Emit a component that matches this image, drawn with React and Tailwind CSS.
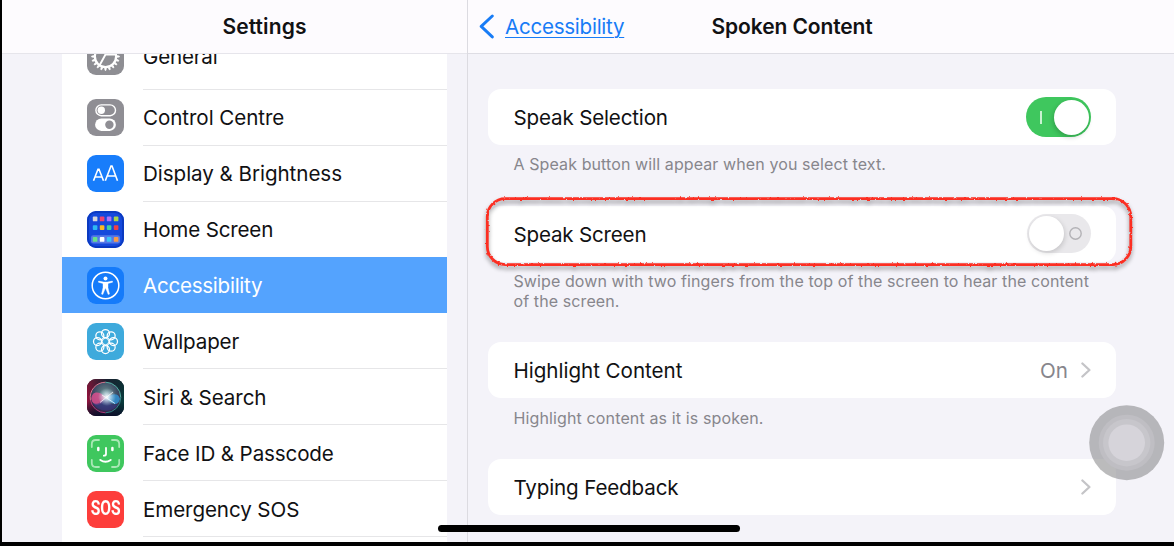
const FONT = "font-['Inter',sans-serif]";

function Tile({ className, children }) {
  return (
    <span className={`block h-[37px] w-[37px] shrink-0 overflow-hidden rounded-[9px] ${className}`}>
      <svg viewBox="0 0 37 37" width="37" height="37" fill="none">
        {children}
      </svg>
    </span>
  );
}

const teeth = Array.from({ length: 20 }, (_, i) => i * 18);
const petals = Array.from({ length: 8 }, (_, i) => (i * Math.PI) / 4);

function GearIcon() {
  return (
    <Tile className="bg-[#8e8e93]">
      <circle cx="18.5" cy="18.5" r="10.6" stroke="#fff" strokeWidth="2.2" />
      {teeth.map((a) => (
        <path key={a} d="M17.7 7.2L18 4.7H19L19.3 7.2Z" fill="#fff" stroke="#fff" strokeWidth=".8" transform={`rotate(${a} 18.5 18.5)`} />
      ))}
      <path d="M18.5 16.5H29M18.5 16.5L13.2 9.4M18.5 16.5L12.6 27.2" stroke="#fff" strokeWidth="1.9" />
    </Tile>
  );
}

function ControlIcon() {
  return (
    <Tile className="bg-[#8f8e94]">
      <rect x="8.9" y="5.9" width="19.6" height="10.8" rx="5.4" stroke="#fff" strokeWidth="1.4" />
      <circle cx="14.3" cy="11.3" r="3.7" fill="#fff" />
      <rect x="8.1" y="19.4" width="20.8" height="12.5" rx="6.25" fill="#fff" />
      <circle cx="22.4" cy="25.7" r="4.2" fill="#8f8e94" />
    </Tile>
  );
}

function DisplayIcon() {
  return (
    <Tile className="bg-[#187dfb]">
      <path d="M6.5 25.8L11 14.3H12L16.5 25.8M8.1 22H14.9M18.3 25.8L24 11H25L30.5 25.8M20.2 21H28.8" stroke="#fff" strokeWidth="1.6" />
    </Tile>
  );
}

const apps = [
  ["#d5d6dc", "#f04470", "#b074f6", "#a9d54d"],
  ["#2db9f3", "#f9b922", "#3fd19c", "#f33f43"],
  ["#68e18a", "#ffffff", "#38c5f8", "#f79a48"],
];

function HomeIcon() {
  return (
    <Tile className="bg-[#1549dc]">
      <rect x="1" y="1" width="35" height="35" rx="8" stroke="#0b3ac0" strokeWidth="2" />
      <rect x="4" y="24.2" width="29" height="8.4" rx="2.4" fill="#5578e6" />
      {apps.map((row, r) =>
        row.map((c, i) => (
          <rect key={`${r}-${i}`} x={5.8 + i * 7} y={[5.5, 14.2, 26][r]} width="4.6" height="4.8" rx=".9" fill={c} />
        ))
      )}
    </Tile>
  );
}

function PersonIcon() {
  return (
    <Tile className="bg-[#157bfa]">
      <circle cx="18.5" cy="18.5" r="13.3" stroke="#fff" strokeWidth="1.5" />
      <circle cx="18.5" cy="11.5" r="2" fill="#fff" />
      <path d="M11.6 14.1L16.8 15.1H20.2L25.4 14.1L25.6 15.2L21 16.5V20.8L22.5 27.1L21.2 27.5L18.8 21.6H18.2L15.8 27.5L14.5 27.1L16 20.8V16.5L11.4 15.2Z" fill="#fff" stroke="#fff" strokeWidth=".4" strokeLinejoin="round" />
    </Tile>
  );
}

function WallpaperIcon() {
  return (
    <Tile className="bg-[#3eaadc]">
      <g stroke="#fff" strokeWidth="1.25">
        {petals.map((a) => (
          <circle key={a} cx={18.5 + 8 * Math.cos(a)} cy={18.5 + 8 * Math.sin(a)} r="4" />
        ))}
      </g>
      <circle cx="18.5" cy="18.5" r="3.2" stroke="#fff" strokeWidth="1" />
      <circle cx="18.5" cy="18.5" r="2.3" fill="#3eaadc" />
    </Tile>
  );
}

function SiriIcon() {
  return (
    <Tile className="bg-[#151525]">
      <defs>
        <linearGradient id="siriBack" x1="0" y1=".3" x2="1" y2=".5">
          <stop offset="0" stopColor="#a3123e" />
          <stop offset=".45" stopColor="#241c38" />
          <stop offset="1" stopColor="#073c3c" />
        </linearGradient>
        <linearGradient id="siriShade" x1="0" y1="0" x2="0" y2="1">
          <stop offset="0" stopColor="#0c2724" stopOpacity=".4" />
          <stop offset=".6" stopColor="#0c1024" stopOpacity="0" />
          <stop offset="1" stopColor="#0b0b28" stopOpacity=".9" />
        </linearGradient>
        <radialGradient id="siriOrb" cx=".5" cy=".35" r=".65">
          <stop offset="0" stopColor="#6b8f90" />
          <stop offset=".6" stopColor="#3c4a63" />
          <stop offset="1" stopColor="#332042" />
        </radialGradient>
        <radialGradient id="siriGlow">
          <stop offset="0" stopColor="#fff" />
          <stop offset=".35" stopColor="#e8f6ff" stopOpacity=".7" />
          <stop offset="1" stopColor="#b9dfee" stopOpacity="0" />
        </radialGradient>
      </defs>
      <rect width="37" height="37" fill="url(#siriBack)" />
      <rect width="37" height="37" fill="url(#siriShade)" />
      <circle cx="18.5" cy="18.5" r="15.2" fill="url(#siriOrb)" />
      <path d="M4.2 20C5 11 13 12 19 18.6C14 28 6 28 4.2 20Z" fill="#e34f91" opacity=".8" />
      <path d="M33 20C31 13 25 15 19 18.6C24 26 31 28 33 20Z" fill="#3190d1" opacity=".85" />
      <path d="M6 24C13 27 15 20 19 18.5C22 24 27 28 31 25C27 34 11 34 6 24Z" fill="#363989" opacity=".6" />
      <circle cx="20" cy="18" r="9" fill="url(#siriGlow)" />
      <path d="M15 16L28 24.5M26 13L13 23.5" stroke="#fff" strokeWidth=".9" opacity=".8" />
      <path d="M3.4 21A15.3 15.3 0 0 1 18.5 3.2" stroke="#e58096" strokeWidth=".9" />
      <path d="M18.5 3.2A15.3 15.3 0 0 1 33.8 18.5" stroke="#58bdad" strokeWidth=".9" />
      <path d="M33.8 18.5A15.3 15.3 0 0 1 18.5 33.8" stroke="#33918f" strokeWidth=".9" />
      <path d="M18.5 33.8A15.3 15.3 0 0 1 3.4 21" stroke="#bb3e80" strokeWidth=".9" />
    </Tile>
  );
}

function FaceIcon() {
  return (
    <Tile className="bg-[#3fc75e]">
      <path d="M4.8 12V9Q4.8 5 8.8 5H12M25 5H28.2Q32.2 5 32.2 9V12M32.2 25V28Q32.2 32 28.2 32H25M12 32H8.8Q4.8 32 4.8 28V25" stroke="#a9e8b5" strokeWidth="1.8" strokeLinecap="round" />
      <g stroke="#fff" strokeLinecap="round">
        <path d="M11.3 12.9V15.1M25.4 12.9V15.1" strokeWidth="2.5" />
        <path d="M19 12.8V19Q19 20.7 16.8 20.7" strokeWidth="1.8" />
        <path d="M13.3 24.9Q18.5 28.7 23.7 24.9" strokeWidth="1.9" />
      </g>
    </Tile>
  );
}

function SosIcon() {
  return (
    <span className="flex h-[37px] w-[37px] shrink-0 items-center justify-center rounded-[9px] bg-[#fd3e3b] font-['Roboto',sans-serif] text-[19.5px] font-bold text-white">
      <span className="scale-x-[.8]">SOS</span>
    </span>
  );
}

const items = [
  { label: "General", icon: GearIcon, track: "tracking-[-0.2px]", height: "h-[66px]" },
  { label: "Control Centre", icon: ControlIcon, track: "tracking-[-0.07px]" },
  { label: "Display & Brightness", icon: DisplayIcon, track: "tracking-[-0.05px]" },
  { label: "Home Screen", icon: HomeIcon, track: "tracking-[-0.17px]" },
  { label: "Accessibility", icon: PersonIcon, track: "tracking-[-0.27px]", active: true },
  { label: "Wallpaper", icon: WallpaperIcon, track: "tracking-[-0.17px]" },
  { label: "Siri & Search", icon: SiriIcon, track: "tracking-[-0.08px]", raised: true },
  { label: "Face ID & Passcode", icon: FaceIcon, track: "tracking-[-0.14px]", raised: true },
  { label: "Emergency SOS", icon: SosIcon, track: "tracking-[-0.1px]", raised: true },
];

function SidebarRow({ label, icon: Icon, track, height = "h-[56px]", active, lineless, raised }) {
  return (
    <li className={`flex ${height} shrink-0 items-center pl-[25px] ${active ? "bg-[#54a3fe] text-white" : ""}`}>
      <Icon />
      <span
        className={`ml-[19px] flex h-full flex-1 items-center border-t ${raised ? "mb-[2px]" : ""} ${
          lineless ? "border-transparent" : "border-[#e6e6e8]"
        } ${track}`}
      >
        <span className={raised ? "pt-[3px]" : "pt-[1px]"}>{label}</span>
      </span>
    </li>
  );
}

function Card({ label, track, children }) {
  return (
    <div className="flex h-[56px] items-center justify-between rounded-[13px] bg-white pl-[25.5px] pr-[25px]">
      <span className={`pt-[2px] ${track}`}>{label}</span>
      {children}
    </div>
  );
}

function Chevron() {
  return (
    <svg width="10" height="16" viewBox="0 0 10 16" fill="none">
      <path d="M1.4 1.5L8.4 8L1.4 14.5" stroke="#c4c4c7" strokeWidth="2.3" strokeLinecap="round" strokeLinejoin="round" />
    </svg>
  );
}

function Switch({ on }) {
  return on ? (
    <span className="flex h-[40px] w-[65px] items-center justify-between rounded-full bg-[#3fc75e] pl-[14px] pr-[2px]">
      <span className="h-[13px] w-[2px] bg-[#c9f3d2]" />
      <span className="h-[35px] w-[35px] rounded-full bg-white shadow-[-1px_2px_5px_rgba(0,0,0,0.2)]" />
    </span>
  ) : (
    <span className="mb-[1px] flex h-[39px] w-[64px] items-center justify-between rounded-full bg-[#e9e8eb] pl-[2px] pr-[9px]">
      <span className="h-[35px] w-[35px] rounded-full bg-white shadow-[1px_2px_5px_rgba(0,0,0,0.15)]" />
      <svg width="13" height="13" viewBox="0 0 13 13" fill="none">
        <circle cx="6.5" cy="6.5" r="5.7" stroke="#b3b2b6" strokeWidth="1.4" />
      </svg>
    </span>
  );
}

export default function App() {
  return (
    <div className={`${FONT} relative flex h-[546px] w-[1174px] overflow-hidden border-b-4 border-l-2 border-black bg-[#f4f3f9] text-[20.6px] leading-[26px] text-[#111113]`}>
      <aside className="flex w-[466px] shrink-0 flex-col border-r border-[#dcdbe1] box-border">
        <header className="flex h-[54px] shrink-0 items-center justify-center border-b border-[#e6e5eb] bg-[#fdfbfe] pl-[60px]">
          <h1 className="text-[21px] font-semibold tracking-[0.1px]">Settings</h1>
        </header>
        <nav className="ml-[60px] w-[385px] flex-1 overflow-hidden bg-white">
          <ul className="-mt-[31px]">
            {items.map((item, i) => (
              <SidebarRow key={item.label} {...item} lineless={item.active || items[i - 1]?.active} />
            ))}
            <li className="-mt-px ml-[81px] border-t border-[#e6e6e8]" />
          </ul>
        </nav>
      </aside>

      <main className="flex flex-1 flex-col">
        <header className="flex h-[54px] shrink-0 items-center border-b border-[#dedde4] bg-[#fdfbfe] pl-[11px]">
          <svg width="16" height="26" viewBox="0 0 16 26" fill="none">
            <path d="M13.3 2L2.2 12.4L13.3 22.9" stroke="#187cf6" strokeWidth="2.9" strokeLinecap="round" strokeLinejoin="round" />
          </svg>
          <a className="ml-[10px] w-[120px] tracking-[-0.27px] text-[#187cf6] underline decoration-1 underline-offset-[3px]">Accessibility</a>
          <h2 className="ml-[86.5px] text-[21px] font-semibold tracking-[-0.1px]">Spoken Content</h2>
        </header>

        <section className="flex w-[648px] flex-col pl-[20px] pt-[35px]">
          <Card label="Speak Selection" track="tracking-[-0.17px]">
            <Switch on />
          </Card>
          <p className="mt-[9px] pl-[25.5px] text-[16px] leading-[20px] tracking-[0.1px] text-[#87868c]">
            A Speak button will appear when you select text.
          </p>
          <div className="mt-[32px]">
            <Card label="Speak Screen" track="tracking-[-0.2px]">
              <Switch />
            </Card>
          </div>
          <p className="mt-[9px] pl-[25.5px] text-[16px] leading-[20px] tracking-[0.1px] text-[#87868c]">
            Swipe down with two fingers from the top of the screen to hear the content
            <br />
            of the screen.
          </p>
          <div className="mt-[31px]">
            <Card label="Highlight Content" track="tracking-[-0.03px]">
              <span className="flex items-center gap-[13px] text-[#87868c]">
                <span className="pt-[2px]">On</span>
                <Chevron />
              </span>
            </Card>
          </div>
          <p className="mt-[10px] pl-[25.5px] text-[16px] leading-[20px] tracking-[0.13px] text-[#87868c]">
            Highlight content as it is spoken.
          </p>
          <div className="mt-[31px]">
            <Card label="Typing Feedback" track="tracking-[-0.15px]">
              <Chevron />
            </Card>
          </div>
        </section>
      </main>

      <svg className="pointer-events-none absolute left-[478px] top-[190px]" width="666" height="88" viewBox="480 190 666 88" fill="none">
        <defs>
          <filter id="rough" x="-5%" y="-20%" width="110%" height="140%">
            <feTurbulence type="fractalNoise" baseFrequency="0.35" numOctaves="2" seed="4" result="n" />
            <feDisplacementMap in="SourceGraphic" in2="n" scale="2.6" xChannelSelector="R" yChannelSelector="G" />
          </filter>
        </defs>
        <g className="drop-shadow-[0_3px_2px_rgba(0,0,0,0.4)]">
          <rect x="487.3" y="198.6" width="643.5" height="66" rx="18" stroke="#fc2f24" strokeWidth="2.8" filter="url(#rough)" />
        </g>
      </svg>

      <svg className="absolute left-[1087px] top-[405px]" width="76" height="76" viewBox="0 0 76 76">
        <circle cx="37.7" cy="37.7" r="37.5" fill="#8a898c" fillOpacity=".58" />
        <circle cx="37.7" cy="37.7" r="28" fill="#bfbec3" />
        <circle cx="37.7" cy="37.7" r="23.7" fill="#c7c6cb" />
        <circle cx="37.7" cy="37.7" r="18.3" fill="#d6d4da" />
      </svg>

      <div className="absolute left-[436px] top-[525px] h-[7px] w-[302px] rounded-full bg-black" />
    </div>
  );
}
